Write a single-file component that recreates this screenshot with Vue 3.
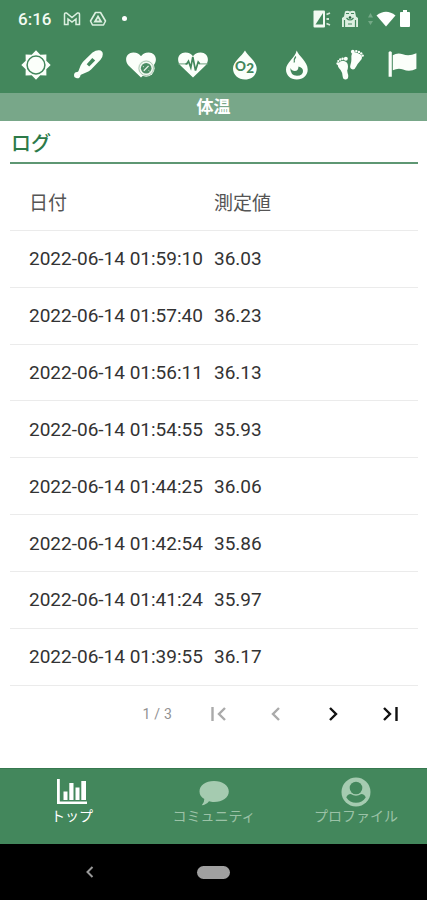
<template>
  <div class="screen">
    <header class="top">
      <div class="status">
        <span class="clock">6:16</span>
        <svg class="st-gmail" viewBox="0 0 18 16" width="18" height="16">
          <path d="M1.500 13.500V3.500Q1.500 1.500 3.500 2L9 6.500 14.500 2q2-.5 2 1.500v10h-3.500V8L9 11 5 8v5.500z" fill="none" stroke="#dcefe0" stroke-width="1.500" />
        </svg>
        <svg class="st-drive" viewBox="0 0 18 16" width="18" height="16">
          <path d="M6.500 1.500h5L16.500 10l-2 4h-11l-2-4z" fill="none" stroke="#dcefe0" stroke-width="1.600" stroke-linejoin="round" />
          <path d="M9 5.500l3 5H6z" fill="none" stroke="#dcefe0" stroke-width="1.800" />
        </svg>
        <i class="dot"></i>
        <span class="grow"></span>
        <svg class="st-phone" viewBox="0 0 18 18" width="18" height="18">
          <rect x=".500" y=".500" width="11.500" height="17" rx="1" fill="#f2faf2" />
          <path d="M2.500 15V3.500h7.500z" fill="#43875c" transform="rotate(180 6.250 9)" />
          <path d="M13.500 4.500l3.500-1.500M13.500 9H16M13.500 13.500l3.500 1.500" stroke="#d5e8d8" stroke-width="1.800" />
        </svg>
        <svg class="st-bag" viewBox="0 0 18 18" width="18" height="18">
          <path d="M4 1.500q2-1.500 5 0 3-1.500 5 0l1 5 2 1.500v9H1V8l2-1.500z" fill="#dcefe0" />
          <path d="M5 3.500h3M10 3.500h3M5.500 8q3.500 4 7 0M3.500 10v7M14.500 10v7M7 14h4" stroke="#43875c" stroke-width="1.200" fill="none" />
          <circle cx="9" cy="7.500" r="1.300" fill="#245f3d" />
        </svg>
        <svg class="st-arrows" viewBox="0 0 5 14" width="5" height="14">
          <path d="M2.500 1L5 5.500H0zM2.500 13L5 9H0z" fill="#75a987" />
        </svg>
        <svg class="st-wifi" viewBox="0 0 20 16" width="20" height="16">
          <path d="M.500 4.500Q10-3 19.500 4.500L10 15.500z" fill="#fff" />
        </svg>
        <svg class="st-battery" viewBox="0 0 10 17" width="10" height="17">
          <path d="M3 0h4v2h2.200q.800 0 .800.800V16q0 1-1 1H1q-1 0-1-1V2.800Q0 2 .800 2H3z" fill="#fff" />
        </svg>
      </div>

      <nav class="tabs">
        <button class="tab" aria-label="sun">
          <svg viewBox="0 0 32 32">
            <path d="M16 1.300l4.300 4.400 6.100-.100-.100 6.100 4.400 4.300-4.400 4.300.100 6.100-6.100-.100-4.300 4.400-4.300-4.400-6.100.100.100-6.100L1.300 16l4.400-4.300-.100-6.100 6.100.100z" />
            <circle cx="16" cy="16" r="8.900" fill="none" stroke="#43875c" stroke-width="1.500" />
          </svg>
        </button>
        <button class="tab" aria-label="thermometer">
          <svg viewBox="0 0 32 32">
            <path d="M20.500 3.500Q24 1 27 1.200q3.800.300 3.800 4 0 3-2.300 5.600l-9.400 9.700q-2 2-5 3l-5.200 2.200-.500.800a3.200 3.200 0 1 1-3-3.600l1-.700 2.100-5.400q1-2.500 3-4.600z" />
            <path d="M20.300 8.900l2.900 2.600-6 6-2.500-2.300z" fill="#43875c" />
          </svg>
        </button>
        <button class="tab" aria-label="blood pressure">
          <svg viewBox="0 0 32 32">
            <path :d="heart" />
            <circle cx="21.200" cy="19.300" r="8.400" fill="#f1f8f0" />
            <circle cx="21.200" cy="19.300" r="7.300" fill="none" stroke="#8bb498" stroke-width=".700" />
            <circle cx="21.200" cy="19.300" r="5.300" fill="#4c8d64" />
            <path d="M18.800 21.700l4.800-4.800" stroke="#e6f2e6" stroke-width="1.300" />
            <path d="M17.800 17.200l1.200.800M23.500 21.500l1 .700" stroke="#c9dfce" stroke-width="1" />
          </svg>
        </button>
        <button class="tab" aria-label="heart rate">
          <svg viewBox="0 0 32 32">
            <path :d="heart" />
            <path d="M1.500 14.800h8M22 14.800h8.500" fill="none" stroke="#8bb498" stroke-width="1.200" />
            <path d="M8.500 14.800h1.300l1.700-2.600 2.300 6.300 2-10.500 2.700 13.500 2.700-8.500 1.500 1.800" fill="none" stroke="#43875c" stroke-width="1.700" />
          </svg>
        </button>
        <button class="tab" aria-label="oxygen">
          <svg viewBox="0 0 32 32">
            <path d="M16 1.500C19 7 27.700 12.500 27.700 19.500 27.700 26 22.500 30.500 16 30.500S4 26 4 19.500C4 12.500 13 7 16 1.500z" />
            <text x="6" y="22" class="o2">O</text>
            <text x="17.200" y="24.300" class="o2">2</text>
          </svg>
        </button>
        <button class="tab" aria-label="calories">
          <svg viewBox="0 0 32 32">
            <path d="M15.700 1.500C17.500 7 26.700 12.500 26.700 20.500c0 6-4.700 10-10.900 10S5 26.500 5 20.500C5 13.500 14 9 15.700 1.500z" />
            <path d="M14.800 7.500q-2.300 3-1.500 6" fill="none" stroke="#43875c" stroke-width="1.300" />
            <path d="M9.300 19q1.500 3 4.500 3 3.500 0 3.700-4.500 4.500 1 4.500 4.500 0 4.800-6 4.800-6.700 0-6.700-7.800z" fill="#43875c" />
          </svg>
        </button>
        <button class="tab" aria-label="steps">
          <svg viewBox="0 0 32 32">
            <path d="M4 14.500q2.500-3.200 6-2.500 4 .800 4 5.500 0 2-.800 4 .200 2 1 4.500.500 4-2.300 4.500-3 .300-3.300-3.500-.200-3.500-2-6Q3 17.500 4 14.500z" />
            <circle cx="3.700" cy="14.600" r="1.300" /><circle cx="4.300" cy="12.100" r="1.100" /><circle cx="6.300" cy="10.500" r="1.200" /><circle cx="8.600" cy="9.800" r="1.200" /><circle cx="11.800" cy="9.700" r="2" />
            <path d="M18 4.500q1-2 4-1 4.500 1 6 4.300.500 2.500-2.300 4.700-2 2-3.500 5-1.500 3.500-4 2.800-2.800-1-1.800-4.300 1-3 1-5.500-.400-4 .600-6z" />
            <circle cx="18.800" cy="2.700" r="1.900" /><circle cx="22.300" cy="2.100" r="1.200" /><circle cx="24.900" cy="2.900" r="1.200" /><circle cx="27.200" cy="4.400" r="1.200" /><circle cx="28.700" cy="6.600" r="1.200" />
          </svg>
        </button>
        <button class="tab" aria-label="goal">
          <svg viewBox="0 0 32 32">
            <path d="M2.600 4.500a1.700 1.700 0 1 1 3.200 0v23.200H2.600z" />
            <path d="M6.800 6.200q4.500-3 10-1 6 2.500 13.600-1v15.500q-6.500 3.800-13.300.900-4.800-2-10.300.700z" />
          </svg>
        </button>
      </nav>
    </header>

    <h1 class="title">体温</h1>

    <main class="content">
      <h2 class="log-title">ログ</h2>
      <div class="table">
        <div class="row head">
          <span class="date">日付</span>
          <span>測定値</span>
        </div>
        <div v-for="log in logs" :key="log.date" class="row">
          <span class="date">{{ log.date }}</span>
          <span>{{ log.value }}</span>
        </div>
      </div>
      <div class="pager">
        <span class="count">1 / 3</span>
        <button class="page off"><svg viewBox="0 0 24 24"><path d="M5.500 5v14M18 6l-6 6 6 6" /></svg></button>
        <button class="page off"><svg viewBox="0 0 24 24"><path d="M15 6l-6 6 6 6" /></svg></button>
        <button class="page"><svg viewBox="0 0 24 24"><path d="M9 6l6 6-6 6" /></svg></button>
        <button class="page"><svg viewBox="0 0 24 24"><path d="M6 6l6 6-6 6M18.500 5v14" /></svg></button>
      </div>
    </main>

    <nav class="bottom">
      <a class="item active">
        <svg viewBox="0 0 32 28" width="32" height="28">
          <path d="M1 1h2.800v22.500H31V26H1zM7.500 13.500h4v8.500h-4zM13.300 5h4.200v17h-4.200zM19.500 9.500h4v12.500h-4zM25.300 3H30v19h-4.700z" />
        </svg>
        <span>トップ</span>
      </a>
      <a class="item">
        <svg viewBox="0 0 32 28" width="32" height="28">
          <path d="M16 3c8.500 0 14.800 4.300 14.800 10.500S24.500 24 16 24c-2 0-3.500-.300-5-.700Q8 27 3.800 27.300q2.700-3 2.500-6.300Q1.500 18 1.500 13.500C1.500 7.300 7.500 3 16 3z" />
        </svg>
        <span>コミュニティ</span>
      </a>
      <a class="item">
        <svg viewBox="0 0 32 28" width="32" height="28">
          <circle cx="16" cy="14" r="14.500" />
          <circle cx="16" cy="10" r="6.300" fill="#43875c" />
          <path d="M6.300 19.500q1-3.300 4.500-3.500 5.200 3.500 10.400 0 3.500.200 4.500 3.500-3.500 5.300-9.700 5.300T6.300 19.500z" fill="#43875c" />
        </svg>
        <span>プロファイル</span>
      </a>
    </nav>

    <footer class="system">
      <span class="side"><svg viewBox="0 0 10 14" width="10" height="14"><path d="M7.500 2L2.500 7l5 5" fill="none" stroke="#999" stroke-width="2" /></svg></span>
      <span class="pill"></span>
      <span class="side"></span>
    </footer>
  </div>
</template>

<script setup>
import { ref } from 'vue'

const heart = 'M16 28.500L3.500 16.500C-1.500 10.500 2 3.500 8.300 3.500c3.700 0 6.200 1.600 7.700 3.700 1.500-2.100 4-3.700 7.700-3.700 6.300 0 9.800 7 4.800 13z'

const logs = ref([
  { date: '2022-06-14 01:59:10', value: '36.03' },
  { date: '2022-06-14 01:57:40', value: '36.23' },
  { date: '2022-06-14 01:56:11', value: '36.13' },
  { date: '2022-06-14 01:54:55', value: '35.93' },
  { date: '2022-06-14 01:44:25', value: '36.06' },
  { date: '2022-06-14 01:42:54', value: '35.86' },
  { date: '2022-06-14 01:41:24', value: '35.97' },
  { date: '2022-06-14 01:39:55', value: '36.17' }
])
</script>

<style>
body {
  margin: 0;
  overflow: hidden;
}
</style>

<style scoped>
.screen {
  display: flex;
  flex-direction: column;
  width: 427px;
  height: 900px;
  overflow: hidden;
  background: #fff;
  font-family: Roboto, "Noto Sans CJK JP", sans-serif;
}

button {
  padding: 0;
  border: 0;
  background: none;
}

.top {
  height: 93px;
  background: #43875c;
}

.status {
  display: flex;
  align-items: center;
  height: 37px;
  padding: 0 17px 0 18px;
  box-sizing: border-box;
}

.clock {
  width: 33px;
  color: #f3fbf2;
  font-size: 17px;
  font-weight: 500;
}

.st-gmail {
  margin-left: 12px;
}

.st-drive {
  margin-left: 8px;
}

.dot {
  width: 5px;
  height: 5px;
  margin-left: 15px;
  border-radius: 50%;
  background: #fff;
}

.grow {
  flex: 1;
}

.st-bag {
  margin-left: 10px;
}

.st-arrows {
  margin: 0 3px 0 9px;
}

.st-battery {
  margin-left: 4px;
}

.tabs {
  display: flex;
  width: 418px;
  height: 56px;
  padding-left: 10px;
}

.tab {
  display: flex;
  flex: 1;
  align-items: center;
  justify-content: center;
}

.tab svg {
  flex: none;
  width: 32px;
  height: 32px;
  fill: #fbfffa;
}

.o2 {
  fill: #43875c;
  font: 900 13.500px Lato, sans-serif;
}

.title {
  height: 28px;
  margin: 0;
  background: #78a789;
  color: #fff;
  font-size: 17px;
  font-weight: 700;
  line-height: 29px;
  text-align: center;
}

.content {
  flex: 1;
  padding: 0 9px 0 10px;
}

.log-title {
  height: 41px;
  margin: 0 0 10px;
  border-bottom: 2px solid #5e9773;
  color: #2c7a49;
  font-size: 20px;
  font-weight: 500;
  line-height: 46px;
  text-indent: 1px;
}

.row {
  display: flex;
  align-items: center;
  height: 56.860px;
  padding-left: 19px;
  box-sizing: border-box;
  border-bottom: 1px solid #ebebeb;
  color: #333;
  font-size: 19px;
}

.head {
  color: #555;
}

.date {
  width: 185px;
  white-space: nowrap;
}

.pager {
  display: flex;
  align-items: center;
  justify-content: flex-end;
  height: 56px;
}

.count {
  margin-right: 18px;
  color: #929292;
  font-size: 14px;
  letter-spacing: 0.200px;
}

.page {
  display: flex;
  align-items: center;
  justify-content: center;
  width: 57px;
}

.page svg {
  width: 24px;
  height: 24px;
  fill: none;
  stroke: #111;
  stroke-width: 2.400;
}

.page.off svg {
  stroke: #aaa;
}

.bottom {
  display: flex;
  height: 76px;
  box-sizing: border-box;
  padding: 9px 0 0 1px;
  border-top: 1px solid #36784f;
  background: #43875c;
}

.item {
  display: flex;
  flex: 1;
  flex-direction: column;
  align-items: center;
  color: #9bc2a7;
  font-size: 14px;
  line-height: 20px;
  white-space: nowrap;
}

.item svg {
  overflow: visible;
  fill: #a5cbb0;
}

.item.active {
  color: #fff;
}

.item.active svg {
  fill: #fff;
}

.system {
  display: flex;
  align-items: center;
  height: 56px;
  background: #000;
}

.side {
  display: flex;
  width: 180px;
  margin-right: 17px;
  justify-content: center;
}

.pill {
  width: 34px;
  height: 13px;
  border-radius: 7px;
  background: #a0a0a0;
}
</style>
